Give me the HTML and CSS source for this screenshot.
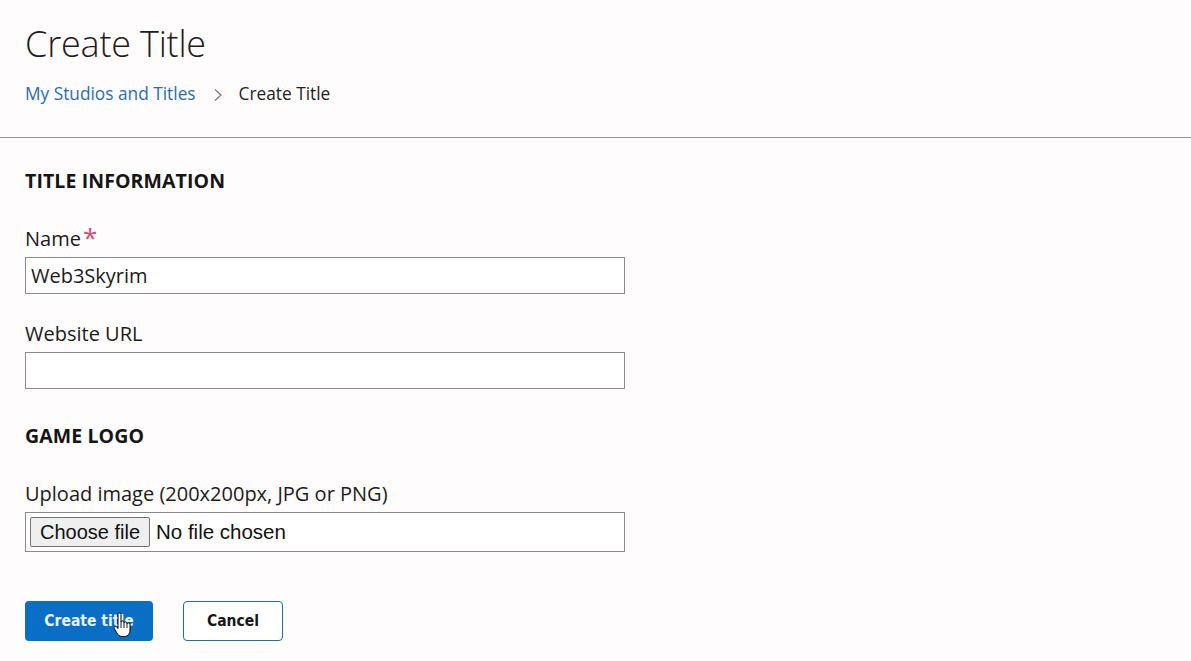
FILE: index.html
```html
<!DOCTYPE html>
<html>
<head>
<meta charset="utf-8">
<link rel="stylesheet" href="styles.css">
</head>
<body>
<header class="page-header">
  <h1 class="page-title">Create Title</h1>
  <nav class="breadcrumb">
    <a class="crumb-link" href="#">My Studios and Titles</a>
    <svg class="crumb-sep" width="10" height="14" viewBox="0 0 10 14"><path d="M2 1.5 L8 7 L2 12.5" fill="none" stroke="#777" stroke-width="1.2"/></svg>
    <span class="crumb-current">Create Title</span>
  </nav>
</header>
<main class="content">
  <h2 class="section-title">TITLE INFORMATION</h2>
  <div class="field field-name">
    <label class="field-label">Name<span class="req">*</span></label>
    <div class="text-input">Web3Skyrim</div>
  </div>
  <div class="field field-url">
    <label class="field-label">Website URL</label>
    <div class="text-input"></div>
  </div>
  <h2 class="section-title logo-title">GAME LOGO</h2>
  <div class="field field-upload">
    <label class="field-label">Upload image (200x200px, JPG or PNG)</label>
    <div class="file-input"><span class="file-btn">Choose file</span><span class="file-text">No file chosen</span></div>
  </div>
  <div class="actions">
    <span class="btn btn-primary">Create title
      <svg class="cursor" width="20" height="27" viewBox="0 0 20 27"><path d="M5 3.5 C5 1.5 8 1.5 8 3.5 L8 11 C8 9.5 11 9.5 11 11 L11 12 C11 10.5 14 10.5 14 12 L14 13 C14 11.5 17 11.5 17 13 L17 19 C17 22.5 15 25.5 11.5 25.5 L9 25.5 C6.5 25.5 5 24 3.5 21.5 L1.3 17.5 C0.5 16 2.3 14.5 3.5 15.8 L5 17.5 Z" fill="#fff" stroke="#000" stroke-width="1"/><path d="M8 11 L8 17 M11 12 L11 17 M14 13 L14 17" stroke="#000" stroke-width="0.9"/></svg>
    </span>
    <span class="btn btn-secondary">Cancel</span>
  </div>
</main>
</body>
</html>
```
FILE: styles.css
```css
html, body {
  margin: 0;
  padding: 0;
  background: #fefcfd;
}
body {
  font-family: "Open Sans", "Noto Sans", sans-serif;
  color: #1b1b1b;
}
.page-header {
  padding: 22px 0 0 25px;
  box-sizing: border-box;
  border-bottom: 1px solid #979797;
  height: 138px;
}
.page-title {
  margin: 0;
  font-weight: 300;
  font-size: 36px;
  line-height: 44px;
  color: #221b1b;
  letter-spacing: -0.2px;
}
.breadcrumb {
  display: flex;
  align-items: center;
  margin-top: 16px;
  font-size: 17.3px;
  line-height: 24px;
}
.crumb-link {
  color: #2c6da7;
  text-decoration: none;
}
.crumb-sep {
  margin: 1px 16px 0 17px;
}
.crumb-current {
  color: #222;
}
.content {
  padding: 30px 0 0 25px;
}
.section-title {
  margin: 0;
  font-size: 19.5px;
  font-weight: 700;
  line-height: 26px;
  color: #151515;
  letter-spacing: 0.1px;
}
.field {
  width: 600px;
}
.field-name {
  margin-top: 32px;
}
.field-url {
  margin-top: 27px;
}
.logo-title {
  margin-top: 34px;
}
.field-upload {
  margin-top: 32px;
}
.field-label {
  display: block;
  font-size: 20px;
  line-height: 26px;
  color: #1b1b1b;
  margin-bottom: 5px;
}
.req {
  color: #d9467a;
  font-size: 26px;
  line-height: 18px;
  margin-left: 2px;
  vertical-align: -1px;
}
.text-input {
  box-sizing: border-box;
  height: 37px;
  border: 1px solid #8a8a8a;
  background: #fff;
  padding: 0 5px;
  font-size: 20px;
  line-height: 35px;
  color: #1b1b1b;
}
.file-input {
  box-sizing: border-box;
  height: 40px;
  border: 1px solid #8a8a8a;
  background: #fff;
  display: flex;
  align-items: center;
  padding-left: 4px;
  font-family: "Liberation Sans", Arial, sans-serif;
  font-size: 20px;
}
.file-btn {
  box-sizing: border-box;
  height: 30px;
  width: 120px;
  display: flex;
  align-items: center;
  justify-content: center;
  background: #efefef;
  border: 1px solid #767676;
  border-radius: 2px;
  color: #111;
}
.file-text {
  margin-left: 6px;
  font-size: 20.5px;
  color: #111;
}
.actions {
  display: flex;
  gap: 30px;
  margin-top: 49px;
}
.btn {
  box-sizing: border-box;
  height: 40px;
  display: flex;
  align-items: center;
  justify-content: center;
  border-radius: 4px;
  font-family: "DejaVu Sans Condensed", "DejaVu Sans", sans-serif;
  font-weight: 700;
  font-size: 15.5px;
  position: relative;
}
.btn-primary {
  width: 128px;
  background: #0a6fc4;
  color: #eaf2fb;
}
.btn-secondary {
  width: 100px;
  background: #fff;
  border: 1px solid #1f6f9f;
  color: #161616;
}
.cursor {
  position: absolute;
  left: 88px;
  top: 10px;
}
```
